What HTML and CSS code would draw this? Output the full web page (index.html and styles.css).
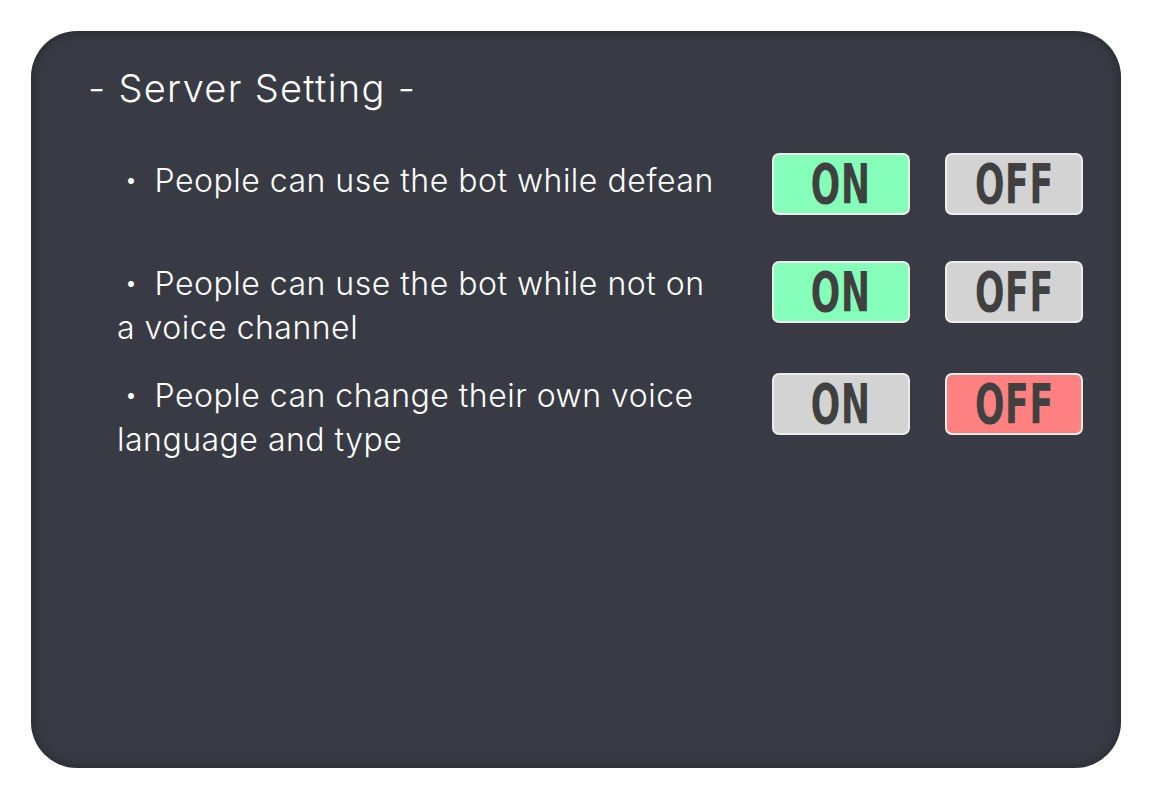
FILE: index.html
```html
<!DOCTYPE html>
<html lang="en">
<head>
<meta charset="utf-8">
<title>Server Setting</title>
<link rel="stylesheet" href="styles.css">
</head>
<body>
  <main class="card">
    <h1 class="title">- Server Setting -</h1>
    <div class="settings">
      <div class="row row--first">
        <p class="label"><span class="dot">・</span> People can use the bot while defean</p>
        <div class="buttons">
          <span class="btn btn--on"><span class="btn-text">ON</span></span>
          <span class="btn"><span class="btn-text">OFF</span></span>
        </div>
      </div>
      <div class="row">
        <p class="label"><span class="dot">・</span> People can use the bot while not on<br>a voice channel</p>
        <div class="buttons">
          <span class="btn btn--on"><span class="btn-text">ON</span></span>
          <span class="btn"><span class="btn-text">OFF</span></span>
        </div>
      </div>
      <div class="row row--last">
        <p class="label"><span class="dot">・</span> People can change their own voice<br>language and type</p>
        <div class="buttons">
          <span class="btn"><span class="btn-text">ON</span></span>
          <span class="btn btn--off"><span class="btn-text">OFF</span></span>
        </div>
      </div>
    </div>
  </main>
</body>
</html>
```

FILE: styles.css
```css
* { box-sizing: border-box; }

html, body {
  margin: 0;
  background: #ffffff;
}

body {
  padding: 31px 32px 32px 31px;
  font-family: "Inter", "Liberation Sans", sans-serif;
  font-weight: 300;
  color: #ffffff;
}

.card {
  height: 737px;
  background: #383b43;
  border-radius: 46px;
  box-shadow: inset 0 0 14px rgba(0, 0, 0, 0.35);
  padding: 35px 38px 0 57px;
}

.title {
  margin: 0;
  font-size: 38px;
  font-weight: 300;
  line-height: 44px;
  letter-spacing: 1.3px;
}

.settings {
  margin-top: 43px;
  padding-left: 29px;
  display: flex;
  flex-direction: column;
  gap: 20px;
}

.row {
  display: flex;
  align-items: flex-start;
  min-height: 88px;
}

.row--last { margin-top: 3px; }

.label {
  flex: 1;
  margin: 0;
  font-size: 32px;
  line-height: 44px;
  letter-spacing: 0.5px;
}

.row--first .label { padding-top: 5px; }

.dot {
  font-family: "Noto Sans CJK JP", sans-serif;
  font-weight: 400;
  font-size: 28px;
  letter-spacing: 0;
}

.buttons {
  display: flex;
  gap: 35px;
}

.btn {
  width: 138px;
  height: 62px;
  border: 2px solid #ececec;
  border-radius: 7px;
  background: #d3d3d3;
  display: flex;
  align-items: center;
  justify-content: center;
  overflow: hidden;
}

.btn--on { background: #85feb9; }
.btn--off { background: #ff8080; }

.btn-text {
  font-family: "DejaVu Sans Condensed", "DejaVu Sans", sans-serif;
  font-weight: 700;
  font-size: 55px;
  line-height: 1;
  color: #404040;
  transform: scaleX(0.7);
  letter-spacing: 1px;
}
```
